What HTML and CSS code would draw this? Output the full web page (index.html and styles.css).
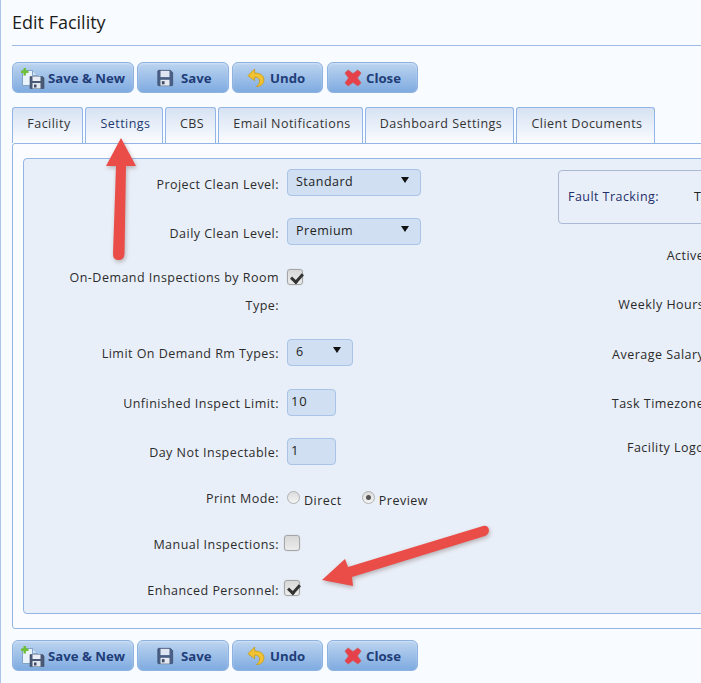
FILE: index.html
```html
<!DOCTYPE html>
<html lang="en">
<head>
<meta charset="utf-8">
<title>Edit Facility</title>
<link rel="stylesheet" href="styles.css">
</head>
<body>
<svg width="0" height="0" class="defs" aria-hidden="true">
  <defs>
    <symbol id="floppy" viewBox="0 0 20 20">
      <path d="M2 2.500Q2 1.500 3 1.500H16L18.500 4V17.500Q18.500 18.500 17.500 18.500H3Q2 18.500 2 17.500Z" fill="#4a5f85" stroke="#39496a" stroke-width=".8"/>
      <rect x="5" y="2" width="10" height="7" fill="#dfe6f1"/>
      <rect x="5" y="12" width="10" height="6.500" fill="#e6eaf0"/>
      <rect x="6.500" y="13.500" width="3" height="3.500" fill="#3f4d6a"/>
    </symbol>
    <symbol id="savenew" viewBox="0 0 26 26">
      <path d="M3.500 5.500H13.500L18.500 10.500V20.500H3.500Z" fill="#eaf3fb" stroke="#7fa3c8"/>
      <path d="M13.500 5.500V10.500H18.500" fill="#cfe0f0" stroke="#7fa3c8"/>
      <path d="M4.500 3H7V5.500H9.500V8H7V10.500H4.500V8H2V5.500H4.500Z" fill="#6fbf3a"/>
      <path d="M11 11.500H23.500L25 13V23.500H11Z" fill="#4a5a76" stroke="#3c4a63" stroke-width=".6"/>
      <rect x="13.500" y="11.500" width="8" height="4.500" fill="#e9eef6"/>
      <rect x="13.500" y="18" width="8" height="5.500" fill="#e3e7ee"/>
      <rect x="15" y="19.500" width="2.500" height="3" fill="#3f4d6a"/>
    </symbol>
    <symbol id="undo" viewBox="0 0 20 22">
      <path d="M8.500 1L1 8.500L8.500 14V10C12.500 10 14 12 14 14.500C14 17 12.500 19 10.500 20.500C15.500 20.500 18.800 17.500 18.800 13C18.800 8 14.500 5.500 8.500 5.500Z" fill="#f1c232" stroke="#c59a1a" stroke-width=".9" stroke-linejoin="round"/>
    </symbol>
    <symbol id="cross" viewBox="0 0 20 20">
      <path d="M4.500 1L10 5L15.500 1L19 4.500L15 10L19 15.500L15.500 19L10 15L4.500 19L1 15.500L5 10L1 4.500Z" fill="#e6404a" stroke="#c4666c" stroke-width=".9" stroke-linejoin="round"/>
    </symbol>
  </defs>
</svg>

<main class="page">
  <h1 class="title">Edit Facility</h1>

  <div class="toolbar">
    <button class="btn btn-new" type="button"><svg class="ico-new"><use href="#savenew"/></svg>Save &amp; New</button>
    <button class="btn btn-save" type="button"><svg class="ico"><use href="#floppy"/></svg>Save</button>
    <button class="btn btn-undo" type="button"><svg class="ico"><use href="#undo"/></svg>Undo</button>
    <button class="btn btn-close" type="button"><svg class="ico"><use href="#cross"/></svg>Close</button>
  </div>

  <nav class="tabs">
    <a class="tab tab-1">Facility</a>
    <a class="tab tab-2 active">Settings</a>
    <a class="tab tab-3">CBS</a>
    <a class="tab tab-4">Email Notifications</a>
    <a class="tab tab-5">Dashboard Settings</a>
    <a class="tab tab-6">Client Documents</a>
  </nav>

  <section class="panel">
    <div class="inner">
      <div class="col-left">
        <div class="row r1"><label class="lbl">Project Clean Level:</label><div class="select wide">Standard<span class="caret"></span></div></div>
        <div class="row r2"><label class="lbl">Daily Clean Level:</label><div class="select wide">Premium<span class="caret"></span></div></div>
        <div class="row r3"><label class="lbl lbl-wrap">On-Demand Inspections by Room Type:</label><span class="check on"></span></div>
        <div class="row r4"><label class="lbl">Limit On Demand Rm Types:</label><div class="select narrow">6<span class="caret"></span></div></div>
        <div class="row r5"><label class="lbl">Unfinished Inspect Limit:</label><div class="input">10</div></div>
        <div class="row r6"><label class="lbl">Day Not Inspectable:</label><div class="input">1</div></div>
        <div class="row r7"><label class="lbl">Print Mode:</label><span class="radio"></span><span class="opt">Direct</span><span class="radio on"></span><span class="opt">Preview</span></div>
        <div class="row r8"><label class="lbl">Manual Inspections:</label><span class="check"></span></div>
        <div class="row r9"><label class="lbl">Enhanced Personnel:</label><span class="check on"></span></div>
      </div>
      <div class="col-right">
        <div class="fault"><span class="fault-lbl">Fault Tracking:</span><span class="fault-val">T</span></div>
        <div class="rlbl rl1">Active:</div>
        <div class="rlbl rl2">Weekly Hours:</div>
        <div class="rlbl rl3">Average Salary:</div>
        <div class="rlbl rl4">Task Timezone:</div>
        <div class="rlbl rl5">Facility Logo:</div>
      </div>
    </div>
  </section>

  <div class="toolbar toolbar-bottom">
    <button class="btn btn-new" type="button"><svg class="ico-new"><use href="#savenew"/></svg>Save &amp; New</button>
    <button class="btn btn-save" type="button"><svg class="ico"><use href="#floppy"/></svg>Save</button>
    <button class="btn btn-undo" type="button"><svg class="ico"><use href="#undo"/></svg>Undo</button>
    <button class="btn btn-close" type="button"><svg class="ico"><use href="#cross"/></svg>Close</button>
  </div>
</main>

<svg class="arrows" viewBox="0 0 701 683" aria-hidden="true">
  <path d="M121 138L136 166H126L124.500 254Q124 260 118.500 260Q113 260 113 254L116 166H106Z"/>
  <path d="M322 580L345 559L348 567L483 526Q488 525 489 530Q489 534 485 536L352 577L353 586Z"/>
</svg>
</body>
</html>
```
FILE: styles.css
```css
* { box-sizing: border-box; }
html, body { margin: 0; height: 683px; overflow: hidden; }
body {
  position: relative;
  width: 701px;
  background: #f8fbff;
  font-family: "Open Sans", "Noto Sans", sans-serif;
  font-size: 12.5px;
  color: #2a2a2a;
  border-left: 1px solid #a9c5ea;
}
.defs { position: absolute; }
.page { width: 700px; padding: 0 0 0 11px; overflow: hidden; }
.title {
  margin: 0;
  height: 46px;
  padding-top: 10px;
  border-bottom: 1px solid #9dbbe4;
  font-size: 18px;
  line-height: 25px;
  font-weight: 400;
  color: #1c1c1c;
}
.toolbar { display: flex; gap: 3px; margin-top: 16px; height: 31px; }
.toolbar-bottom { margin-top: 11px; }
.btn {
  display: flex;
  align-items: center;
  height: 31px;
  padding: 0;
  border: 1px solid #8db2e0;
  border-radius: 6px;
  background: linear-gradient(#bcd4f0, #7fabe0);
  color: #1f3d78;
  font: 700 13.2px "Open Sans", sans-serif;
  box-shadow: inset 0 1px 2px rgba(255,255,255,.35);
}
.btn-new { width: 122px; padding-left: 6px; gap: 3px; }
.btn-save { width: 92px; padding-left: 18px; gap: 7px; }
.btn-undo { width: 91px; padding-left: 14px; gap: 5px; }
.btn-close { width: 91px; margin-left: 1px; padding-left: 16px; gap: 4px; }
.ico { width: 18px; height: 20px; flex: none; }
.ico-new { width: 26px; height: 26px; flex: none; }

.tabs { display: flex; gap: 2px; margin-top: 14px; height: 36px; }
.tab {
  display: flex;
  align-items: center;
  justify-content: center;
  height: 36px;
  padding: 0 0 4px 3px;
  border: 1px solid #93b5e6;
  border-bottom: none;
  border-radius: 3px 3px 0 0;
  background: linear-gradient(#d6e2f3, #fbfcff);
  color: #333;
  letter-spacing: .47px;
}
.tab.active { color: #1f3a70; }
.tab-1 { width: 71px; }
.tab-2 { width: 78px; }
.tab-3 { width: 51px; }
.tab-4 { width: 145px; }
.tab-5 { width: 149px; }
.tab-6 { width: 139px; }

.panel {
  width: 720px;
  height: 486px;
  padding: 14px 0 0 10px;
  border: 1px solid #93b5e6;
  border-radius: 3px;
  background: #fafcff;
}
.inner {
  display: flex;
  width: 720px;
  height: 456px;
  border: 1px solid #93b5e6;
  border-radius: 4px;
  background: #e9eff8;
}
.col-left { width: 534px; flex: none; padding-top: 10px; }
.row { display: flex; align-items: center; }
.lbl {
  flex: none;
  width: 255px;
  margin-right: 8px;
  text-align: right;
  letter-spacing: .47px;
  color: #2c2c2c;
}
.lbl-wrap { padding-left: 40px; line-height: 28px; }
.r1 .lbl, .r2 .lbl { padding-top: 3px; }
.r4 .lbl, .r5 .lbl, .r6 .lbl { padding-top: 1px; }
.r1 { height: 27px; margin-bottom: 22px; }
.r2 { height: 27px; margin-bottom: 19px; }
.r3 { height: 56px; align-items: flex-start; margin-bottom: 19px; }
.r4 { height: 27px; margin-bottom: 23px; }
.r5 { height: 27px; margin-bottom: 22px; }
.r6 { height: 27px; margin-bottom: 20px; }
.r7 { height: 27px; margin-bottom: 19px; }
.r8 { height: 27px; margin-bottom: 19px; }
.r9 { height: 27px; }
.select, .input {
  position: relative;
  height: 27px;
  padding: 0 0 3px 8px;
  display: flex;
  align-items: center;
  border: 1px solid #a9c4e6;
  border-radius: 4px;
  background: #d0dff1;
  color: #222;
  letter-spacing: .5px;
}
.input {
  width: 49px;
  padding: 0 0 4px 3px;
  font-size: 13px;
  letter-spacing: .8px;
}
.wide { width: 134px; }
.narrow { width: 66px; }
.caret {
  position: absolute;
  right: 11px;
  top: 7px;
  border: 4px solid transparent;
  border-top: 6px solid #111;
  border-bottom: 0;
}
.check {
  position: relative;
  flex: none;
  width: 16px;
  height: 16px;
  border: 1px solid #a5a5a5;
  border-radius: 3px;
  background: linear-gradient(#d8d8d8, #ececec);
  box-shadow: 0 0 1px rgba(90,90,90,.4);
}
.r3 .check { margin-top: 5px; }
.r8 .check { margin: -4px 0 0 -3px; }
.r9 .check { margin: -5px 0 0 -3px; }
.check.on::after {
  content: "";
  position: absolute;
  left: 5px;
  top: 1px;
  width: 5px;
  height: 9px;
  border: solid #333;
  border-width: 0 3px 3px 0;
  transform: rotate(42deg);
}
.radio {
  position: relative;
  flex: none;
  width: 13px;
  height: 13px;
  margin-top: -3px;
  border: 1px solid #b0b0b0;
  border-radius: 50%;
  background: linear-gradient(#dcdcdc, #f4f4f4);
}
.radio.on::after {
  content: "";
  position: absolute;
  left: 3px;
  top: 3px;
  width: 5px;
  height: 5px;
  border-radius: 50%;
  background: #555;
}
.opt { margin: 3px 20px 0 4px; letter-spacing: .5px; }

.col-right { flex: 1; }
.fault {
  display: flex;
  align-items: center;
  width: 200px;
  height: 54px;
  margin-top: 11px;
  padding: 0 0 2px 9px;
  border: 1px solid #aab9d4;
  border-radius: 4px;
  color: #1f2f6a;
  letter-spacing: .45px;
}
.fault-lbl { width: 126px; flex: none; }
.fault-val { color: #222; }
.rlbl {
  width: 150px;
  text-align: right;
  letter-spacing: .47px;
  line-height: 18px;
}
.rl1 { margin-top: 23px; }
.rl2 { margin-top: 31px; }
.rl3 { margin-top: 32px; }
.rl4 { margin-top: 31px; }
.rl5 { margin-top: 26px; }

.arrows {
  position: absolute;
  left: -1px;
  top: 0;
  width: 701px;
  height: 683px;
  fill: #ea4d47;
  filter: drop-shadow(1px 2px 2px rgba(90,60,60,.35));
  pointer-events: none;
}
```
